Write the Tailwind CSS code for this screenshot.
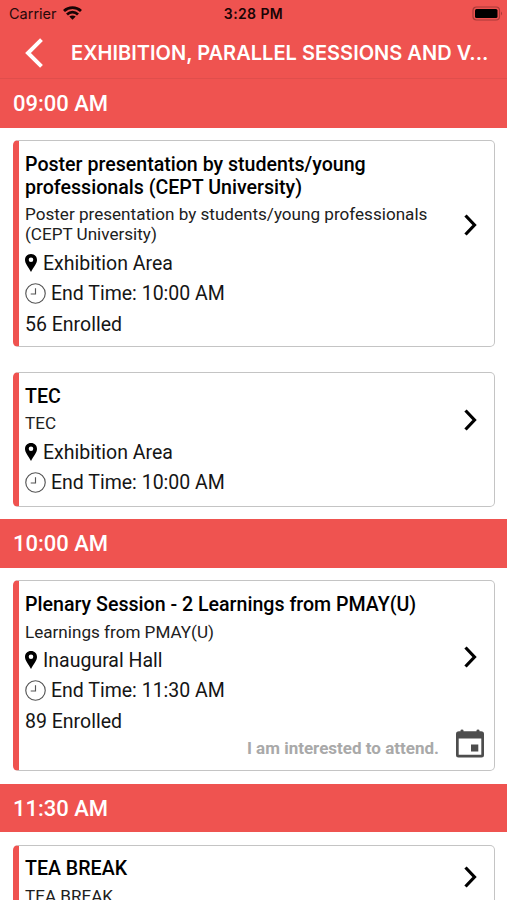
<!DOCTYPE html>
<html lang="en">
<head>
<meta charset="utf-8">
<title>Sessions</title>
<script src="https://cdn.jsdelivr.net/npm/@tailwindcss/browser@4"></script>
</head>
<body class="w-[507px] h-[900px] overflow-hidden bg-white font-[Roboto,sans-serif] text-[#151515]">
<svg class="hidden">
  <symbol id="pin" viewBox="0 0 12 18"><path fill-rule="evenodd" d="M6 0C2.400 0 0 2.600 0 5.900C0 9.500 3.500 13 6 18C8.500 13 12 9.500 12 5.900C12 2.600 9.600 0 6 0ZM6 3.400A2.300 2.300 0 1 1 6 8A2.300 2.300 0 1 1 6 3.400Z"/></symbol>
  <symbol id="clock" viewBox="0 0 22 22"><g fill="none" stroke="#555" stroke-width="1.200"><circle cx="11" cy="11" r="10.200"/><path d="M11 5.500V11.500H6"/></g></symbol>
  <symbol id="chev" viewBox="0 0 14 22"><path d="M2.500 1.500L11.500 11L2.500 20.500" fill="none" stroke="#000" stroke-width="3.200"/></symbol>
</svg>
<div class="flex flex-col h-[900px] overflow-hidden">
  <header class="bg-[#ef5350] h-[79px] shrink-0 border-b border-[#e04e4c] font-[Inter,sans-serif]">
    <div class="grid grid-cols-3 items-center h-[27px] px-[9px] text-[14px] text-[#26090a]">
      <div class="flex items-center gap-[6px]"><span class="text-[14.5px]">Carrier</span>
        <svg class="w-[19px] h-[14px] -mt-[1px]" viewBox="0 0 19 14"><g fill="none" stroke="#180405" stroke-width="2.800"><path d="M1 5C5.800 .500 13.200 .500 18 5"/><path d="M4 8.400C7.200 5.400 11.800 5.400 15 8.400"/></g><path fill="#180405" d="M6.300 10.600C8.200 9 10.800 9 12.700 10.600L9.500 13.800Z"/></svg>
      </div>
      <div class="text-center font-semibold text-[14px] text-[#180405] tracking-[0.400px] whitespace-nowrap">3:28 PM</div>
      <svg class="justify-self-end w-[31px] h-[15px] -mr-[5px]" viewBox="0 0 31 15"><rect x="1" y="1" width="26.500" height="13" rx="3.500" fill="none" stroke="#a83a38" stroke-width="1.200"/><rect x="3" y="3" width="22.500" height="9" rx="1.500" fill="#000"/><path d="M29 5.500Q31 7.500 29 9.500Z" fill="#a83a38"/></svg>
    </div>
    <div class="flex items-center h-[51px] pl-[25px]">
      <svg class="w-[19px] h-[30px]" viewBox="0 0 19 30"><path d="M16.500 1.700L3 15L16.500 28.300" fill="none" stroke="#fff" stroke-width="4"/></svg>
      <h1 class="ml-[27px] text-[20px] font-semibold tracking-[0.020px] text-white whitespace-nowrap">EXHIBITION, PARALLEL SESSIONS AND V...</h1>
    </div>
  </header>

  <h2 class="flex items-center h-[49px] shrink-0 bg-[#ef5350] pl-[13px] text-[22px] font-medium text-white">09:00 AM</h2>
  <section class="flex flex-col gap-[25px] pl-[13px] pr-[12px] pt-[12px] h-[391px] shrink-0">
    <article class="flex h-[207px] shrink-0 rounded-[5px] border border-[#c4c4c4] border-l-[6px] border-l-[#ef5350] pl-[6px] pt-[12px]">
      <div class="w-[420px]">
        <h3 class="text-[19.600px] leading-[23px] font-medium text-black">Poster presentation by students/young<br>professionals (CEPT University)</h3>
        <p class="mt-[5px] mb-[4px] text-[17.100px] leading-[20px] text-[#202020]">Poster presentation by students/young professionals<br>(CEPT University)</p>
        <div class="flex items-center h-[30.5px] gap-[6px] text-[19.500px]"><svg class="w-[12px] h-[18px]"><use href="#pin"/></svg>Exhibition Area</div>
        <div class="flex items-center h-[30.5px] gap-[5px] text-[19.500px]"><svg class="w-[21px] h-[21px]"><use href="#clock"/></svg>End Time: 10:00 AM</div>
        <div class="flex items-center h-[30.5px] text-[19.500px]">56 Enrolled</div>
      </div>
      <svg class="w-[14px] h-[22px] ml-[17.500px] mt-[61px]"><use href="#chev"/></svg>
    </article>
    <article class="flex h-[135px] shrink-0 rounded-[5px] border border-[#c4c4c4] border-l-[6px] border-l-[#ef5350] pl-[6px] pt-[12px]">
      <div class="w-[420px]">
        <h3 class="text-[19.600px] leading-[23px] font-medium text-black">TEC</h3>
        <p class="mt-[5px] mb-[4px] text-[17.100px] leading-[20px] text-[#202020]">TEC</p>
        <div class="flex items-center h-[30.5px] gap-[6px] text-[19.500px]"><svg class="w-[12px] h-[18px]"><use href="#pin"/></svg>Exhibition Area</div>
        <div class="flex items-center h-[30.5px] gap-[5px] text-[19.500px]"><svg class="w-[21px] h-[21px]"><use href="#clock"/></svg>End Time: 10:00 AM</div>
      </div>
      <svg class="w-[14px] h-[22px] ml-[17.500px] mt-[24px]"><use href="#chev"/></svg>
    </article>
  </section>

  <h2 class="flex items-center h-[49px] shrink-0 bg-[#ef5350] pl-[13px] text-[22px] font-medium text-white">10:00 AM</h2>
  <section class="pl-[13px] pr-[12px] pt-[12px] h-[216px] shrink-0">
    <article class="relative flex h-[191px] rounded-[5px] border border-[#c4c4c4] border-l-[6px] border-l-[#ef5350] pl-[6px] pt-[12px]">
      <div class="w-[420px]">
        <h3 class="text-[19.600px] leading-[23px] font-medium text-black">Plenary Session - 2 Learnings from PMAY(U)</h3>
        <p class="mt-[6px] mb-[3px] text-[17.100px] leading-[20px] text-[#202020]">Learnings from PMAY(U)</p>
        <div class="flex items-center h-[30.5px] gap-[6px] text-[19.500px]"><svg class="w-[12px] h-[18px]"><use href="#pin"/></svg>Inaugural Hall</div>
        <div class="flex items-center h-[30.5px] gap-[5px] text-[19.500px]"><svg class="w-[21px] h-[21px]"><use href="#clock"/></svg>End Time: 11:30 AM</div>
        <div class="flex items-center h-[30.5px] text-[19.500px]">89 Enrolled</div>
      </div>
      <svg class="w-[14px] h-[22px] ml-[17.500px] mt-[53px]"><use href="#chev"/></svg>
      <div class="absolute right-[10px] bottom-[9px] flex items-center gap-[17px] text-[17px] font-bold text-[#a9a9a9] whitespace-nowrap"><span class="mt-[9px]">I am interested to attend.</span>
        <svg class="w-[28px] h-[29px]" viewBox="0 0 28 29"><path fill="#4d4d4d" fill-rule="evenodd" d="M4.500 2.200V1.500Q4.500 .5 6 .5T7.500 1.500V2.200H20.500V1.500Q20.500 .5 22 .5T23.500 1.500V2.200H25Q28 2.200 28 5V26Q28 28.500 25.500 28.500H2.500Q0 28.500 0 26V5Q0 2.200 3 2.200ZM2.700 9.500V25.700H25.300V9.500ZM15 15.500H22.300V22.500H15Z"/></svg>
      </div>
    </article>
  </section>

  <h2 class="flex items-center h-[48px] shrink-0 bg-[#ef5350] pl-[13px] text-[22px] font-medium text-white">11:30 AM</h2>
  <section class="pl-[13px] pr-[12px] pt-[13px] shrink-0">
    <article class="flex h-[104px] rounded-[5px] border border-[#c4c4c4] border-l-[6px] border-l-[#ef5350] pl-[6px] pt-[11px]">
      <div class="w-[420px]">
        <h3 class="text-[19.600px] leading-[23px] font-medium text-black">TEA BREAK</h3>
        <p class="mt-[6px] text-[17.100px] leading-[20px] text-[#202020]">TEA BREAK</p>
      </div>
      <svg class="w-[14px] h-[22px] ml-[17.500px] mt-[9px]"><use href="#chev"/></svg>
    </article>
  </section>
</div>
</body>
</html>
